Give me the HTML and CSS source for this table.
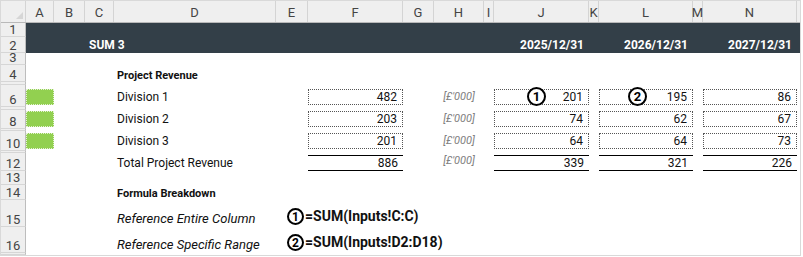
FILE: index.html
```html
<!DOCTYPE html>
<html lang="en">
  <head>
    <meta charset="UTF-8" />
    <title>SUM 3</title>
    <link rel="stylesheet" href="styles.css">
  </head>
  <body>
    <div class="sheet">
      <div class="row head">
        <div class="corner"></div>
        <div class="ch">A</div>
        <div class="ch">B</div>
        <div class="ch">C</div>
        <div class="ch">D</div>
        <div class="ch">E</div>
        <div class="ch">F</div>
        <div class="ch">G</div>
        <div class="ch">H</div>
        <div class="ch">I</div>
        <div class="ch">J</div>
        <div class="ch">K</div>
        <div class="ch">L</div>
        <div class="ch">M</div>
        <div class="ch">N</div>
        <div class="ch last"></div>
      </div>

      <div class="row r1 band"><div class="rh">1</div></div>
      <div class="row r2 band">
        <div class="rh">2</div>
        <div class="title">SUM 3</div>
        <div class="date col-j">2025/12/31</div>
        <div class="date col-l">2026/12/31</div>
        <div class="date col-n">2027/12/31</div>
      </div>
      <div class="row r3"><div class="rh">3</div></div>
      <div class="row r4">
        <div class="rh">4</div>
        <div class="label heading">Project Revenue</div>
      </div>
      <div class="row r5"><div class="rh">5</div></div>

      <div class="row r6">
        <div class="rh">6</div>
        <div class="flag"></div>
        <div class="label">Division 1</div>
        <div class="box col-f">482</div>
        <div class="unit">[£'000]</div>
        <div class="box col-j">201<span class="circle over over-j">1</span></div>
        <div class="box col-l">195<span class="circle over over-l">2</span></div>
        <div class="box col-n">86</div>
      </div>
      <div class="row r7"><div class="rh">7</div></div>
      <div class="row r8">
        <div class="rh">8</div>
        <div class="flag"></div>
        <div class="label">Division 2</div>
        <div class="box col-f">203</div>
        <div class="unit">[£'000]</div>
        <div class="box col-j">74</div>
        <div class="box col-l">62</div>
        <div class="box col-n">67</div>
      </div>
      <div class="row r9"><div class="rh">9</div></div>
      <div class="row r10">
        <div class="rh">10</div>
        <div class="flag"></div>
        <div class="label">Division 3</div>
        <div class="box col-f">201</div>
        <div class="unit">[£'000]</div>
        <div class="box col-j">64</div>
        <div class="box col-l">64</div>
        <div class="box col-n">73</div>
      </div>
      <div class="row r11"><div class="rh">11</div></div>
      <div class="row r12">
        <div class="rh">12</div>
        <div class="label sum">Total Project Revenue</div>
        <div class="total col-f">886</div>
        <div class="unit">[£'000]</div>
        <div class="total col-j">339</div>
        <div class="total col-l">321</div>
        <div class="total col-n">226</div>
      </div>
      <div class="row r13"><div class="rh">13</div></div>
      <div class="row r14">
        <div class="rh">14</div>
        <div class="label heading">Formula Breakdown</div>
      </div>
      <div class="row r15">
        <div class="rh">15</div>
        <div class="label note">Reference Entire Column</div>
        <div class="formula"><span class="circle">1</span>=SUM(Inputs!C:C)</div>
      </div>
      <div class="row r16">
        <div class="rh">16</div>
        <div class="label note">Reference Specific Range</div>
        <div class="formula"><span class="circle">2</span>=SUM(Inputs!D2:D18)</div>
      </div>
      <div class="row r17"><div class="rh"></div></div>
    </div>
  </body>
</html>
```

FILE: styles.css
```css
* {
  margin: 0;
  padding: 0;
  box-sizing: border-box;
}
body {
  font-family: Roboto, 'Liberation Sans', sans-serif;
  background: #fff;
  color: #111;
}
.sheet {
  width: 801px;
  border: 1px solid #d9d9d9;
}
.row {
  display: grid;
  grid-template-columns: 25px 28px 31px 29px 162px 32px 95px 31px 50px 10px 95px 10px 94px 10px 94px 3px;
  grid-template-rows: 100%;
  overflow: hidden;
}

/* column letters */
.head {
  height: 22px;
  background: #efefef;
  border-bottom: 1px solid #b9b9b9;
}
.corner {
  position: relative;
  border-right: 1px solid #d4d4d4;
}
.corner::after {
  content: '';
  position: absolute;
  right: 2px;
  bottom: 3px;
  border-left: 7px solid transparent;
  border-bottom: 7px solid #d6d6d6;
}
.ch {
  display: flex;
  align-items: flex-end;
  justify-content: center;
  padding-bottom: 1px;
  border-right: 1px solid #d4d4d4;
  font-size: 13px;
  line-height: 16px;
  color: #444;
}
.ch.last {
  border-right: none;
}

/* row numbers */
.rh {
  grid-column: 1;
  display: flex;
  align-items: flex-end;
  justify-content: center;
  background: #efefef;
  border-right: 1px solid #bdbdbd;
  border-bottom: 1px solid #d6d6d6;
  font-size: 13px;
  line-height: 13px;
  color: #444;
  overflow: hidden;
}

.r1 { height: 14px; }
.r2 { height: 16px; }
.r3 { height: 12px; }
.r4 { height: 17px; }
.r5 { height: 3px; }
.r6 { height: 22px; }
.r7 { height: 3px; }
.r8 { height: 19px; }
.r9 { height: 2px; }
.r10 { height: 20px; }
.r11 { height: 2px; }
.r12 { height: 18px; }
.r13 { height: 14px; }
.r14 { height: 15px; }
.r15 { height: 27px; }
.r16 { height: 26px; }
.r17 { height: 2px; }

/* title band */
.band {
  background: #333f48;
  color: #fff;
}
.title,
.date {
  align-self: end;
  padding-bottom: 1px;
  font-size: 12px;
  font-weight: bold;
  line-height: 14px;
}
.title {
  grid-column: 4;
  padding-left: 4px;
  white-space: nowrap;
}
.date {
  text-align: right;
  padding-right: 5px;
}

.col-f { grid-column: 7; }
.col-j { grid-column: 11; }
.col-l { grid-column: 13; }
.col-n { grid-column: 15; }

.label {
  grid-column: 5;
  align-self: end;
  margin-bottom: 2px;
  padding-left: 3px;
  font-size: 12px;
  line-height: 16px;
  white-space: nowrap;
}
.label.heading {
  font-size: 11px;
  font-weight: bold;
  line-height: 13px;
  margin-bottom: 0;
}
.label.sum {
  margin-bottom: 0;
}
.label.note {
  font-size: 13px;
  font-style: italic;
  margin-bottom: 0;
}

.flag {
  grid-column: 2;
  align-self: end;
  height: 16px;
  margin-bottom: 2px;
  background: #92d050;
  border: 1px dotted #e4f1d4;
}

.box,
.total {
  position: relative;
  height: 16px;
  padding-right: 5px;
  text-align: right;
  font-size: 12px;
  line-height: 14px;
}
.box {
  align-self: end;
  margin-bottom: 2px;
  border: 1px dotted #555;
}
.total {
  align-self: start;
  margin-top: 2px;
  border-top: 1px solid #000;
  border-bottom: 1px solid #000;
}

.unit {
  grid-column: 9;
  align-self: end;
  margin-bottom: 2px;
  text-align: center;
  font-size: 11px;
  font-style: italic;
  line-height: 16px;
  color: #808080;
}

.circle {
  display: inline-flex;
  flex-shrink: 0;
  align-items: center;
  justify-content: center;
  width: 17px;
  height: 17px;
  border: 2px solid #000;
  border-radius: 50%;
  background: #fff;
  font-size: 12px;
  font-weight: bold;
  line-height: 1;
  color: #000;
}
.circle.over {
  position: absolute;
  top: -3px;
  width: 19px;
  height: 19px;
  font-size: 13px;
}
.over-j { left: 32px; }
.over-l { left: 28px; }

.formula {
  grid-column: 6 / 12;
  align-self: end;
  display: flex;
  align-items: center;
  gap: 1px;
  margin-bottom: 2px;
  padding-left: 11px;
  font-size: 14px;
  font-weight: bold;
  line-height: 17px;
  white-space: nowrap;
}
```
